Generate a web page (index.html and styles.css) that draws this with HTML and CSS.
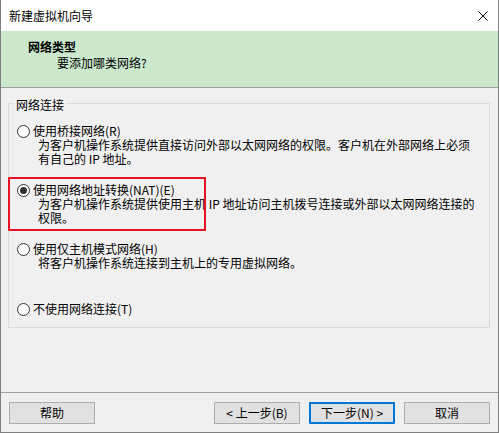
FILE: index.html
```html
<!DOCTYPE html>
<html lang="zh-CN">
<head>
    <meta charset="UTF-8">
    <title>新建虚拟机向导</title>
    <link rel="stylesheet" href="styles.css">
</head>
<body>
    <div class="window">
        <div class="titlebar">
            <span class="title">新建虚拟机向导</span>
            <svg class="close" width="10" height="10" viewBox="0 0 10 10">
                <path d="M0.5 0.5 L9.5 9.5 M9.5 0.5 L0.5 9.5" stroke="#000" stroke-width="1" fill="none"/>
            </svg>
        </div>
        <div class="header">
            <div class="header-title">网络类型</div>
            <div class="header-sub">要添加哪类网络?</div>
        </div>
        <div class="content">
            <fieldset class="group">
                <legend>网络连接</legend>
                <div class="options">
                    <div class="option">
                        <label class="option-head"><input type="radio" name="net">使用桥接网络(R)</label>
                        <div class="desc">为客户机操作系统提供直接访问外部以太网网络的权限。客户机在外部网络上必须<br>有自己的 IP 地址。</div>
                    </div>
                    <div class="option">
                        <label class="option-head"><input type="radio" name="net" checked>使用网络地址转换(NAT)(E)</label>
                        <div class="desc">为客户机操作系统提供使用主机 IP 地址访问主机拨号连接或外部以太网网络连接的<br>权限。</div>
                        <div class="mark"></div>
                    </div>
                    <div class="option tall">
                        <label class="option-head"><input type="radio" name="net">使用仅主机模式网络(H)</label>
                        <div class="desc">将客户机操作系统连接到主机上的专用虚拟网络。</div>
                    </div>
                    <div class="option last">
                        <label class="option-head"><input type="radio" name="net">不使用网络连接(T)</label>
                    </div>
                </div>
            </fieldset>
        </div>
        <div class="footer">
            <button>帮助</button>
            <div class="nav">
                <button>&lt; 上一步(B)</button>
                <button class="default">下一步(N) &gt;</button>
                <button class="cancel">取消</button>
            </div>
        </div>
    </div>
</body>
</html>
```

FILE: styles.css
```css
body {
    margin: 0;
    font-family: "Noto Sans CJK SC", "Noto Sans", sans-serif;
    font-size: 12px;
    line-height: 14px;
    color: #000;
    background: #fff;
}
.window {
    width: 499px;
    height: 433px;
    box-sizing: border-box;
    border: 1px solid #7f7f7f;
    border-top: none;
    background: #f0f0f0;
}
.titlebar {
    height: 31px;
    background: #fff;
    display: flex;
    align-items: center;
    justify-content: space-between;
    padding: 0 10px 0 8px;
}
.close {
    display: block;
}
.header {
    height: 56px;
    box-sizing: border-box;
    background: #cbe8cd;
    border-bottom: 1px solid #a0a0a0;
    padding: 9px 0 0 27px;
    height: 57px;
}
.header-title {
    font-weight: bold;
}
.header-sub {
    margin-top: 2px;
    padding-left: 29px;
}
.content {
    height: 304px;
    padding: 6px 0 0 7px;
    box-sizing: border-box;
}
.group {
    width: 482px;
    box-sizing: border-box;
    margin: 0;
    padding: 0;
    border: 1px solid #dcdcdc;
}
.group legend {
    margin-left: 5px;
    padding: 4px 2px 0;
}
.options {
    padding: 12px 0 11px 8px;
}
.option {
    position: relative;
    height: 59px;
}
.option.tall {
    height: 60px;
}
.option.last {
    height: 14px;
}
.option-head {
    display: flex;
    align-items: center;
    gap: 3px;
    height: 14px;
    white-space: nowrap;
}
.option-head input {
    appearance: none;
    margin: 0;
    width: 13px;
    height: 13px;
    border: 1px solid #333;
    border-radius: 50%;
    background: #fff;
    box-sizing: border-box;
    display: grid;
    place-items: center;
}
.option-head input:checked::after {
    content: "";
    width: 7px;
    height: 7px;
    border-radius: 50%;
    background: #333;
}
.desc {
    padding-left: 21px;
    white-space: nowrap;
}
.mark {
    position: absolute;
    top: -6px;
    left: -9px;
    width: 198px;
    height: 54px;
    box-sizing: border-box;
    border: 2px solid #e81123;
}
.footer {
    border-top: 1px solid #a0a0a0;
    display: flex;
    justify-content: space-between;
    padding: 9px 8px 0 8px;
}
.nav {
    display: flex;
    gap: 9px;
}
.footer button {
    width: 86px;
    height: 22px;
    box-sizing: border-box;
    margin: 0;
    padding: 0;
    font: inherit;
    color: #000;
    background: #e1e1e1;
    border: 1px solid #adadad;
}
.footer button.default {
    border: 2px solid #0078d7;
}
.nav .cancel {
    margin-left: 0;
}
```
